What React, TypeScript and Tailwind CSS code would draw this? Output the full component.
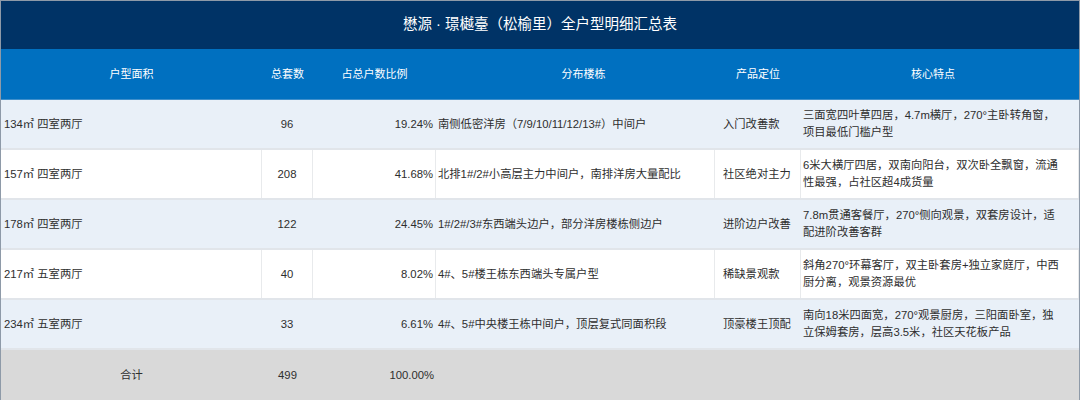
import React from "react";

const rows = [
  {
    area: "134㎡ 四室两厅",
    count: "96",
    pct: "19.24%",
    bld: "南侧低密洋房（7/9/10/11/12/13#）中间户",
    pos: "入门改善款",
    feat: ["三面宽四叶草四居，4.7m横厅，270°主卧转角窗，", "项目最低门槛户型"],
    blue: true,
  },
  {
    area: "157㎡ 四室两厅",
    count: "208",
    pct: "41.68%",
    bld: "北排1#/2#小高层主力中间户，南排洋房大量配比",
    pos: "社区绝对主力",
    feat: ["6米大横厅四居，双南向阳台，双次卧全飘窗，流通", "性最强，占社区超4成货量"],
    blue: false,
  },
  {
    area: "178㎡ 四室两厅",
    count: "122",
    pct: "24.45%",
    bld: "1#/2#/3#东西端头边户，部分洋房楼栋侧边户",
    pos: "进阶边户改善",
    feat: ["7.8m贯通客餐厅，270°侧向观景，双套房设计，适", "配进阶改善客群"],
    blue: true,
  },
  {
    area: "217㎡ 五室两厅",
    count: "40",
    pct: "8.02%",
    bld: "4#、5#楼王栋东西端头专属户型",
    pos: "稀缺景观款",
    feat: ["斜角270°环幕客厅，双主卧套房+独立家庭厅，中西", "厨分离，观景资源最优"],
    blue: false,
  },
  {
    area: "234㎡ 五室两厅",
    count: "33",
    pct: "6.61%",
    bld: "4#、5#中央楼王栋中间户，顶层复式同面积段",
    pos: "顶豪楼王顶配",
    feat: ["南向18米四面宽，270°观景厨房，三阳面卧室，独", "立保姆套房，层高3.5米，社区天花板产品"],
    blue: true,
  },
];

const grid = "grid grid-cols-[261px_51px_123px_279px_86px_278px]";

export default function App() {
  return (
    <div
      className="w-[1080px] h-[400px] overflow-hidden border-l border-r border-t border-[#8e9aa8] bg-[#d9d9d9] text-[11.3px] text-[#2e2e2e]"
      style={{ fontFamily: '"Liberation Sans", "Noto Sans CJK SC", sans-serif' }}
    >
      <div className="h-[48px] bg-[#003366] flex items-center justify-center text-white text-[14.5px]">
        懋源 · 璟樾臺（松榆里）全户型明细汇总表
      </div>
      <div className={`${grid} h-[51px] bg-[#0070c0] text-white text-[11px] border-b border-[#3f8fcb]`}>
        <div className="flex items-center justify-center">户型面积</div>
        <div className="flex items-center justify-center">总套数</div>
        <div className="flex items-center justify-center">占总户数比例</div>
        <div className="flex items-center justify-center pl-[16px]">分布楼栋</div>
        <div className="flex items-center justify-center">产品定位</div>
        <div className="flex items-center justify-center pr-[14px]">核心特点</div>
      </div>
      {rows.map((r, i) => {
        const cell = r.blue
          ? "flex items-center border-r border-[#e9f0f8]"
          : "flex items-center border-r border-[#e8eaec]";
        return (
          <div
            key={i}
            className={`${grid} h-[50px] border-b-2 border-[#e1e5ea] ${r.blue ? "bg-[#e9f0f8]" : "bg-white"}`}
          >
            <div className={`${cell} pl-[3px]`}>{r.area}</div>
            <div className={`${cell} justify-center`}>{r.count}</div>
            <div className={`${cell} justify-end pr-[2px]`}>{r.pct}</div>
            <div className={`${cell} pl-[2px]`}>{r.bld}</div>
            <div className={`${cell} pl-[8px]`}>{r.pos}</div>
            <div className={`${cell} pl-[2px] leading-[17px]`}>
              <div className="flex flex-col whitespace-nowrap">
                <span>{r.feat[0]}</span>
                <span>{r.feat[1]}</span>
              </div>
            </div>
          </div>
        );
      })}
      <div className={`${grid} h-[50px] bg-[#d9d9d9]`}>
        <div className="flex items-center justify-center">合计</div>
        <div className="flex items-center justify-center">499</div>
        <div className="flex items-center justify-end pr-[2px]">100.00%</div>
        <div />
        <div />
        <div />
      </div>
    </div>
  );
}
